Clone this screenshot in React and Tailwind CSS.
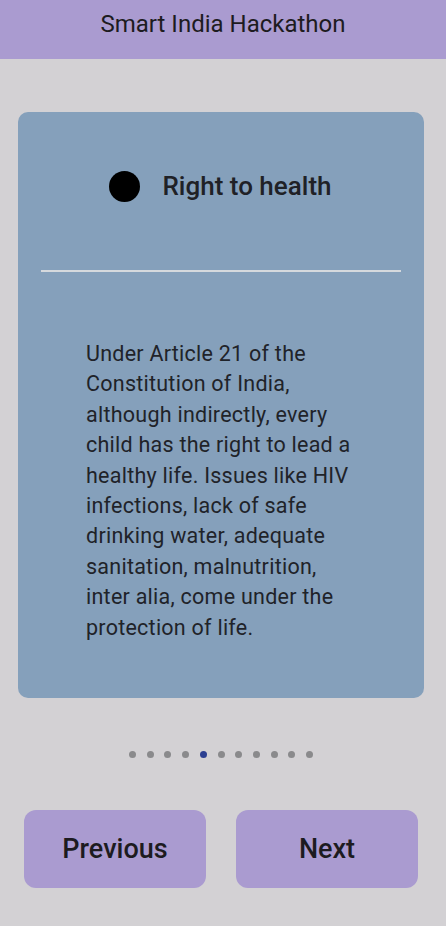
const dots = Array.from({ length: 11 });

export default function App() {
  return (
    <div className="flex min-h-[926px] flex-col bg-[#d3d1d4]" style={{ fontFamily: "Roboto, 'Noto Sans', sans-serif" }}>
      <header className="flex h-[59px] justify-center bg-[#aa9bd0] pt-[9px]">
        <h1 className="text-[24px] leading-[30px] text-[#1d1b20]">Smart India Hackathon</h1>
      </header>

      <div className="ml-[18px] mt-[53px] flex h-[586px] w-[406px] flex-col rounded-[10px] bg-[#85a0bb]">
        <div className="flex items-center justify-center gap-[23px] pt-[57px] pr-[2px]">
          <span className="h-[31px] w-[31px] rounded-full bg-black" />
          <h2 className="text-[26px] leading-[34px] font-medium text-[#1f2126]">Right to health</h2>
        </div>
        <div className="mx-[23px] mt-[67px] h-[2px] bg-[#d5d9dd]" />
        <p className="ml-[68px] mt-[67px] w-[274px] text-[21.5px] leading-[30.4px] tracking-[0.25px] text-[#1f2329]">
          Under Article 21 of the Constitution of India, although indirectly, every child has the right to lead a healthy life. Issues like HIV infections, lack of safe drinking water, adequate sanitation, malnutrition, inter alia, come under the protection of life.
        </p>
      </div>

      <div className="mt-[53px] flex w-[442px] justify-center gap-[10.7px]">
        {dots.map((_, i) => (
          <span key={i} className={`h-[7px] w-[7px] rounded-full ${i === 4 ? "bg-[#2c3f91]" : "bg-[#8a8a8c]"}`} />
        ))}
      </div>

      <div className="mt-[52px] flex w-[442px] gap-[30px] px-[24px]">
        <button className="flex h-[78px] flex-1 items-center justify-center rounded-[12px] bg-[#aa9bd0] text-[27px] font-medium text-[#1d1b20]">
          Previous
        </button>
        <button className="flex h-[78px] flex-1 items-center justify-center rounded-[12px] bg-[#aa9bd0] text-[27px] font-medium text-[#1d1b20]">
          Next
        </button>
      </div>
    </div>
  );
}
